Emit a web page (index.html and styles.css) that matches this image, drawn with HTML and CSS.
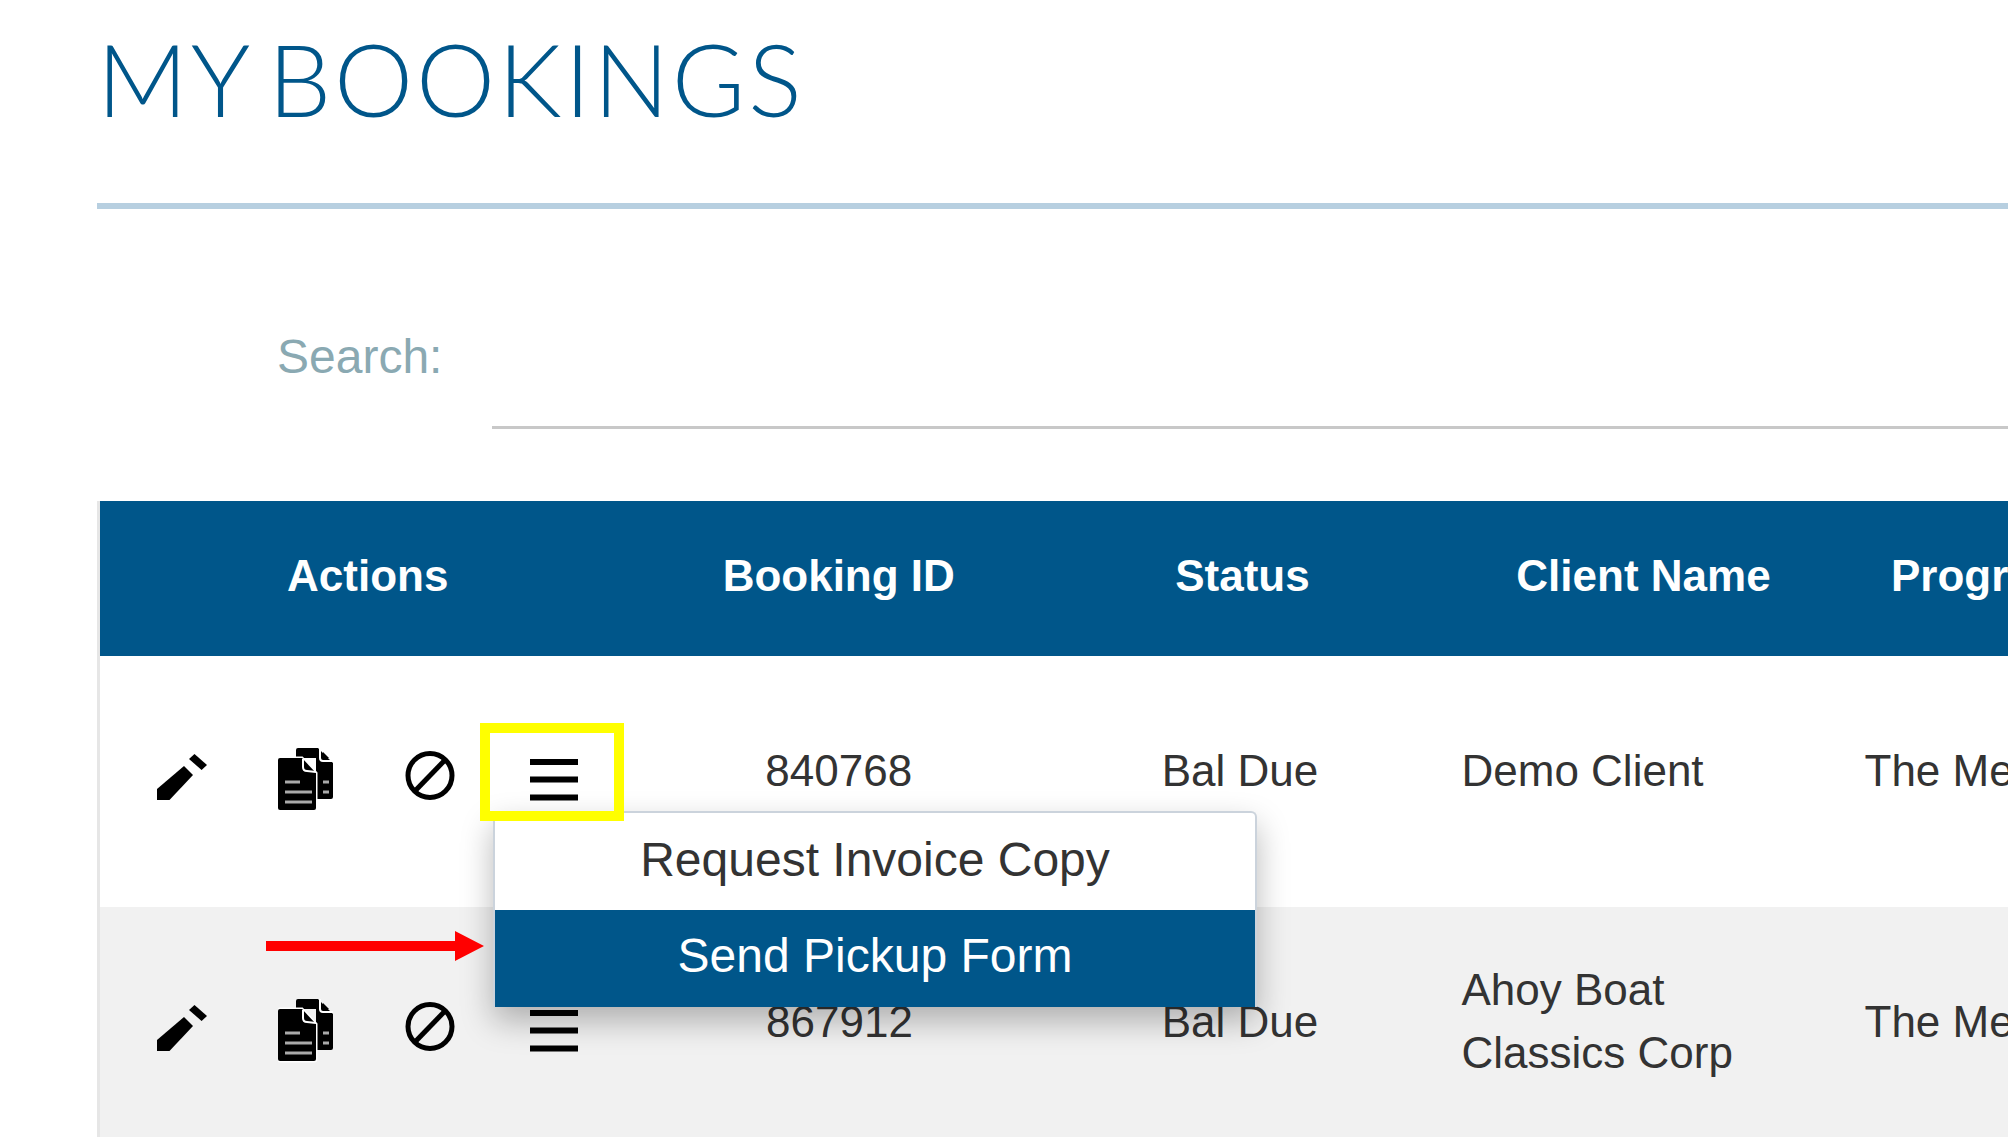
FILE: index.html
```html
<!DOCTYPE html>
<html>
<head>
    <title>My Bookings</title>
    <link rel="stylesheet" href="styles.css">
</head>
<body>
    <svg class="sprites" width="0" height="0">
        <symbol id="i-pencil" viewBox="0 0 50 64">
            <path d="M0 41 L27 18 L36 27 L12.500 52 L0 52 Z"/>
            <path d="M32 11 L37.500 6 L50 17 L44.600 22 Z"/>
        </symbol>
        <symbol id="i-docs" viewBox="0 0 56 64">
            <!-- back page -->
            <path d="M18 2 Q18 0 20 0 L40 0 L55 15 L55 49 Q55 51 53 51 L38 51 L38 10 L18 10 Z"/>
            <path d="M42 0 L42 10 Q42 13 45 13 L55 13" fill="none" stroke="#fff" stroke-width="2"/>
            <path d="M45 4 L45 10 L51 10 Z"/>
            <!-- front page -->
            <path d="M2 10 L24 10 L38 25 L38 60 Q38 62 36 62 L2 62 Q0 62 0 60 L0 12 Q0 10 2 10 Z" stroke="#fff" stroke-width="3" paint-order="stroke"/>
            <path d="M25 11 L25 19 Q25 23 29 23 L38 24" fill="none" stroke="#fff" stroke-width="2"/>
            <path d="M7 34 H22 M7 44 H34 M7 54 H34 M45 34 H51 M45 44 H51" stroke="#aaa" stroke-width="3"/>
        </symbol>
        <symbol id="i-ban" viewBox="0 0 51 64">
            <circle cx="25" cy="27.500" r="22" fill="none" stroke="#000" stroke-width="5"/>
            <path d="M10 43 L40 12" stroke="#000" stroke-width="5"/>
        </symbol>
        <symbol id="i-menu" viewBox="0 0 50 64">
            <path d="M1 14 H49 M1 31.500 H49 M1 49.500 H49" stroke="#000" stroke-width="6"/>
        </symbol>
    </svg>

    <div class="page">
        <h1 class="title">MY BOOKINGS</h1>
        <div class="rule"></div>

        <div class="search">
            <label class="search-label" for="search">Search:</label>
            <input class="search-input" id="search" type="text">
        </div>

        <table class="bookings">
            <colgroup>
                <col class="col-actions">
                <col class="col-id">
                <col class="col-status">
                <col class="col-client">
                <col class="col-program">
            </colgroup>
            <thead>
                <tr>
                    <th>Actions</th>
                    <th>Booking ID</th>
                    <th>Status</th>
                    <th>Client Name</th>
                    <th>Program</th>
                </tr>
            </thead>
            <tbody>
                <tr>
                    <td class="actions">
                        <div class="icons">
                            <svg class="icon w-pencil"><use href="#i-pencil"/></svg>
                            <svg class="icon w-docs"><use href="#i-docs"/></svg>
                            <svg class="icon w-ban"><use href="#i-ban"/></svg>
                            <div class="menu-open">
                                <svg class="icon w-menu"><use href="#i-menu"/></svg>
                                <div class="dropdown">
                                    <div class="dropdown-item">Request Invoice Copy</div>
                                    <div class="dropdown-item active">Send Pickup Form</div>
                                </div>
                                <div class="highlight"></div>
                                <svg class="arrow" viewBox="0 0 218 30">
                                    <path d="M0 10 H189 V0 L218 15 L189 30 V20 H0 Z" fill="#f00"/>
                                </svg>
                            </div>
                        </div>
                    </td>
                    <td class="center">840768</td>
                    <td class="center status">Bal Due</td>
                    <td>Demo Client</td>
                    <td class="program">The Meeting</td>
                </tr>
                <tr class="alt">
                    <td class="actions">
                        <div class="icons">
                            <svg class="icon w-pencil"><use href="#i-pencil"/></svg>
                            <svg class="icon w-docs"><use href="#i-docs"/></svg>
                            <svg class="icon w-ban"><use href="#i-ban"/></svg>
                            <svg class="icon w-menu"><use href="#i-menu"/></svg>
                        </div>
                    </td>
                    <td class="center">867912</td>
                    <td class="center status">Bal Due</td>
                    <td>Ahoy Boat<br>Classics Corp</td>
                    <td class="program">The Meeting</td>
                </tr>
            </tbody>
        </table>
    </div>
</body>
</html>
```

FILE: styles.css
```css
html, body {
    height: 100%;
}

body {
    margin: 0;
    overflow: hidden;
    background-color: #fff;
    font-family: "Liberation Sans", Arial, sans-serif;
    color: #333;
}

.sprites {
    position: absolute;
}

.page {
    padding-left: 97px;
    width: 1911px;
}

.title {
    margin: 0;
    padding-top: 24px;
    height: 175px;
    box-sizing: border-box;
    font-family: "Lato", sans-serif;
    font-weight: 300;
    font-size: 100px;
    letter-spacing: 2.9px;
    word-spacing: -11.5px;
    line-height: 108px;
    color: #00568a;
}

.rule {
    height: 6px;
    background-color: #b7cfe0;
    margin-top: 28px;
}

/* Search */
.search {
    display: flex;
    align-items: flex-end;
    margin-left: 180px;
    height: 292px;
    box-sizing: border-box;
    padding-bottom: 72px;
}

.search-label {
    width: 215px;
    font-size: 48px;
    line-height: 100px;
    padding-bottom: 22px;
    color: #8aa9b2;
}

.search-input {
    flex: 1;
    height: 80px;
    box-sizing: border-box;
    border: none;
    border-bottom: 3px solid #c8c8c8;
    outline: none;
    background: none;
}

/* Table */
.bookings {
    table-layout: fixed;
    width: 2017px;
    border-collapse: collapse;
    font-size: 44px;
    line-height: 63px;
    border-left: 3px solid #e6e6e6;
}

.col-actions { width: 535px; }
.col-id { width: 410px; }
.col-status { width: 396px; }
.col-client { width: 406px; }
.col-program { width: 270px; }

.bookings th {
    height: 155px;
    padding: 0 19px 7px 21px;
    box-sizing: border-box;
    background-color: #00568a;
    color: #fff;
    font-weight: bold;
    text-align: center;
    white-space: nowrap;
}

.bookings td {
    height: 251px;
    padding: 0 20px 23px 22px;
    box-sizing: border-box;
    white-space: nowrap;
}

.bookings td.center {
    text-align: center;
}

.bookings td.status {
    padding-right: 25px;
}

.bookings td.program {
    padding-left: 19px;
}

.bookings td.actions {
    padding: 0 0 3px;
}

.alt td {
    background-color: #f1f1f1;
}

/* Action icons */
.icons {
    display: flex;
    gap: 71px;
    padding-left: 57px;
}

.icon {
    display: block;
    height: 64px;
}

.w-pencil { width: 50px; }
.w-docs { width: 56px; }
.w-ban { width: 51px; margin-right: 2px; }
.w-menu { width: 50px; }

.menu-open {
    position: relative;
    z-index: 2;
}

.highlight {
    position: absolute;
    left: -49px;
    top: -25px;
    width: 144px;
    height: 98px;
    box-sizing: border-box;
    border: 10px solid #ff0;
}

.dropdown {
    position: absolute;
    left: -36px;
    top: 63px;
    width: 764px;
    box-sizing: border-box;
    background-color: #fff;
    border: 2px solid #cbd3dc;
    border-bottom: none;
    border-radius: 6px 6px 0 0;
    box-shadow: 0 14px 32px rgba(0, 0, 0, 0.28);
    font-size: 48px;
    line-height: 94px;
    text-align: center;
}

.dropdown-item {
    height: 97px;
    color: #333;
}

.dropdown-item.active {
    background-color: #00568a;
    color: #fff;
    line-height: 92px;
}

.arrow {
    position: absolute;
    left: -263px;
    top: 183px;
    width: 218px;
    height: 30px;
}
```
